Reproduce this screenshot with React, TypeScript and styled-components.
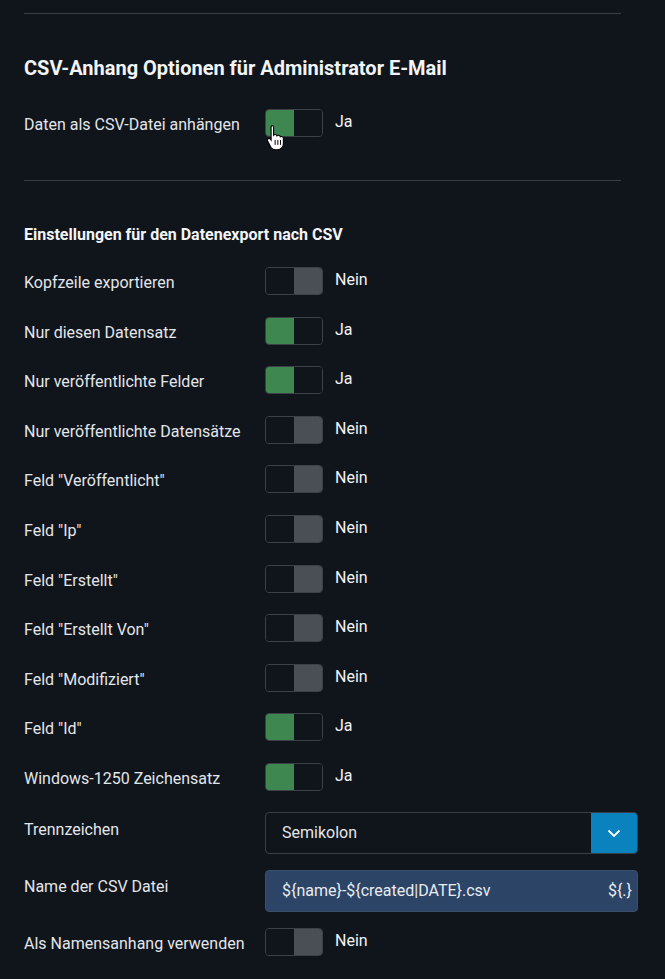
import React from "react";
import styled, { createGlobalStyle } from "styled-components";

const GlobalStyle = createGlobalStyle`
    html, body {
        margin: 0;
        background: #10141b;
    }
    body {
        font-family: Roboto, "Liberation Sans", sans-serif;
        color: #e3e6ea;
    }
`;

const Page = styled.div`
    width: 665px;
    height: 979px;
    overflow: hidden;
    padding: 13px 0 0 24px;
    box-sizing: border-box;
`;

const Divider = styled.hr`
    width: 597px;
    margin: 0;
    border: none;
    border-top: 1px solid #3a3f47;
`;

const Heading = styled.h2`
    margin: 42px 0 29px;
    font-size: 20px;
    line-height: 24px;
    font-weight: 700;
    color: #f2f4f6;
`;

const SubHeading = styled.h3`
    margin: 44px 0 23px;
    font-size: 16px;
    line-height: 19px;
    font-weight: 700;
    color: #f2f4f6;
`;

const Row = styled.div<{ $gap?: number }>`
    display: grid;
    grid-template-columns: 241px 1fr;
    align-items: center;
    min-height: 28px;
    margin-bottom: ${(p) => p.$gap ?? 21.6}px;
`;

const Label = styled.label<{ $top?: boolean }>`
    font-size: 16px;
    color: #e3e6ea;
    align-self: ${(p) => (p.$top ? "start" : "center")};
    margin-top: ${(p) => (p.$top ? 7 : 3)}px;
`;

const SwitchWrap = styled.div`
    display: flex;
    align-items: center;
    gap: 12px;
    position: relative;
`;

const Track = styled.div`
    display: grid;
    grid-template-columns: 1fr 1fr;
    width: 58px;
    height: 28px;
    box-sizing: border-box;
    border: 1px solid #3c4149;
    border-radius: 4px;
    overflow: hidden;
`;

const Half = styled.span<{ $fill: string }>`
    background: ${(p) => p.$fill};
`;

const State = styled.span`
    font-size: 16px;
    color: #f2f4f6;
    margin-top: -3px;
`;

const Cursor = styled.svg`
    position: absolute;
    left: 1px;
    top: 15px;
`;

const Select = styled.div`
    display: flex;
    width: 373px;
    height: 42px;
    margin-top: -1px;
    box-sizing: border-box;
    border: 1px solid #3a3f47;
    border-radius: 4px;
    overflow: hidden;
`;

const SelectText = styled.span`
    flex: 1;
    display: flex;
    align-items: center;
    padding-left: 16px;
    font-size: 16px;
    color: #e3e6ea;
`;

const SelectButton = styled.span`
    width: 46px;
    background: #0a82be;
    display: flex;
    align-items: center;
    justify-content: center;
`;

const Input = styled.div`
    display: flex;
    align-items: center;
    justify-content: space-between;
    width: 373px;
    height: 42px;
    box-sizing: border-box;
    padding: 0 5px 0 16px;
    background: #2c4466;
    border: 1px solid #3a4f6c;
    border-radius: 4px;
    font-size: 16px;
    color: #e8ecf1;
`;

function Switch({ on, cursor }: { on: boolean; cursor?: boolean }) {
    return (
        <SwitchWrap>
            <Track>
                <Half $fill={on ? "#3f8750" : "#10141b"} />
                <Half $fill={on ? "#10141b" : "#4a4f56"} />
            </Track>
            <State>{on ? "Ja" : "Nein"}</State>
            {cursor && (
                <Cursor width="20" height="27" viewBox="0 0 16 22">
                    <path
                        d="M4.5 1.2c.9 0 1.5.6 1.5 1.5v6.4c.3-.4.8-.6 1.3-.6.8 0 1.4.5 1.5 1.2.3-.3.7-.5 1.2-.5.8 0 1.4.6 1.5 1.3.3-.2.6-.3 1-.3.9 0 1.5.7 1.5 1.6v4.2c0 2.8-2 5-4.8 5H7.6c-1.6 0-2.9-.8-3.8-2.1L1.2 13.9c-.4-.7-.2-1.5.4-1.9.6-.4 1.4-.3 1.9.3l.5.7V2.7c0-.9.6-1.5 1.5-1.5z"
                        fill="#fff"
                        stroke="#000"
                        strokeWidth="0.9"
                    />
                    <path d="M7.3 13v4M9.5 13v4M11.7 13v4" stroke="#000" strokeWidth="0.8" />
                </Cursor>
            )}
        </SwitchWrap>
    );
}

const rows: [string, boolean][] = [
    ["Kopfzeile exportieren", false],
    ["Nur diesen Datensatz", true],
    ["Nur veröffentlichte Felder", true],
    ["Nur veröffentlichte Datensätze", false],
    ['Feld "Veröffentlicht"', false],
    ['Feld "Ip"', false],
    ['Feld "Erstellt"', false],
    ['Feld "Erstellt Von"', false],
    ['Feld "Modifiziert"', false],
    ['Feld "Id"', true],
    ["Windows-1250 Zeichensatz", true],
];

export default function App() {
    return (
        <>
            <GlobalStyle />
            <Page>
                <Divider />
                <Heading>CSV-Anhang Optionen für Administrator E-Mail</Heading>
                <Row $gap={43}>
                    <Label>Daten als CSV-Datei anhängen</Label>
                    <Switch on cursor />
                </Row>
                <Divider />
                <SubHeading>Einstellungen für den Datenexport nach CSV</SubHeading>
                {rows.map(([label, on]) => (
                    <Row key={label}>
                        <Label>{label}</Label>
                        <Switch on={on} />
                    </Row>
                ))}
                <Row $gap={16}>
                    <Label $top>Trennzeichen</Label>
                    <Select>
                        <SelectText>Semikolon</SelectText>
                        <SelectButton>
                            <svg width="14" height="14" viewBox="0 0 14 14">
                                <path d="M1.5 4.5l5.5 5.5 5.5-5.5" fill="none" stroke="#fff" strokeWidth="1.8" />
                            </svg>
                        </SelectButton>
                    </Select>
                </Row>
                <Row $gap={16}>
                    <Label $top>Name der CSV Datei</Label>
                    <Input>
                        <span>{"${name}-${created|DATE}.csv"}</span>
                        <span>{"${.}"}</span>
                    </Input>
                </Row>
                <Row>
                    <Label>Als Namensanhang verwenden</Label>
                    <Switch on={false} />
                </Row>
            </Page>
        </>
    );
}
